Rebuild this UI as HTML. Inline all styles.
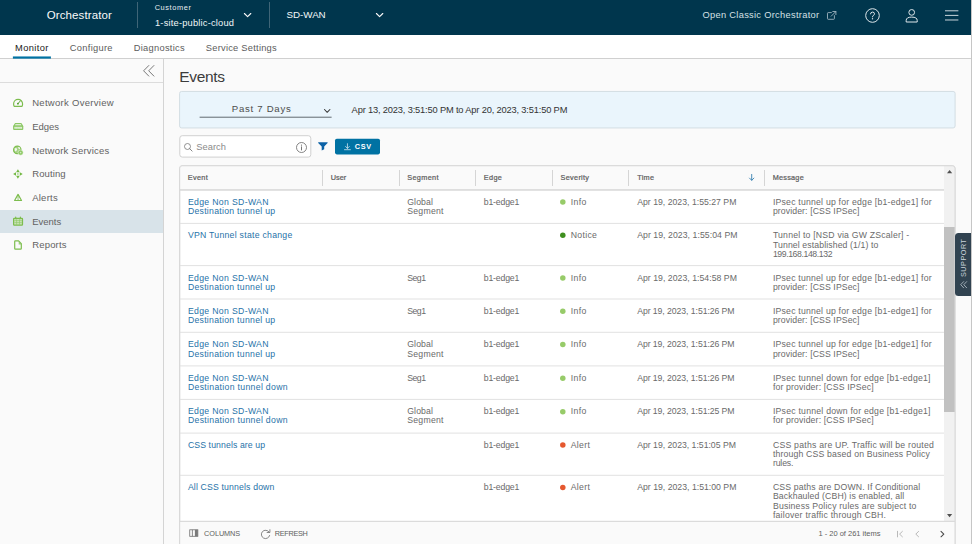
<!DOCTYPE html>
<html lang="en">
<head>
<meta charset="utf-8">
<title>Orchestrator - Events</title>
<style>
html,body{margin:0;padding:0;}
body{width:972px;height:544px;overflow:hidden;position:relative;background:#fafafa;font-family:"Liberation Sans",sans-serif;}
.t{position:absolute;white-space:pre;line-height:1;display:block;}
.abs{position:absolute;}
header{position:absolute;left:0;top:0;width:972px;height:35px;background:#00364d;}
.vdiv{position:absolute;top:2px;width:1px;height:26px;background:#3f6577;}
nav.sub{position:absolute;left:0;top:35px;width:972px;height:23px;background:#fff;border-bottom:1px solid #d0d0d0;}
aside{position:absolute;left:0;top:59px;width:163px;height:485px;background:#fafafa;border-right:1px solid #d4d4d4;}
.side-sep{position:absolute;left:0;top:23px;width:163px;height:1px;background:#dcdcdc;}
.side-active{position:absolute;left:0;top:150.6px;width:163px;height:23.4px;background:#d8e3e9;}
svg{position:absolute;overflow:visible;}
.g{fill:none;stroke:#60a830;stroke-width:1;stroke-linecap:round;stroke-linejoin:round;}
main{position:absolute;left:164px;top:59px;width:808px;height:485px;}
.thead{position:absolute;left:180px;top:166px;width:764px;height:23.2px;background:#fafafa;}
.colsep{position:absolute;top:170px;width:1px;height:15.6px;background:#d5d5d5;}
.sbar{position:absolute;left:944px;top:166px;width:11px;height:356px;background:#f1f1f1;}
.thumb{position:absolute;left:944px;top:227.3px;width:11px;height:185.2px;background:#c1c1c1;}
.foot{position:absolute;left:180px;top:521.3px;width:775px;height:23px;background:#fafafa;}
.support{position:absolute;left:955px;top:233px;width:17px;height:63.3px;background:#314351;border-radius:3.5px 0 0 3.5px;}
.rot{position:absolute;white-space:pre;transform-origin:0 0;transform:rotate(-90deg);font-size:7.2px;line-height:1;color:#c9d3da;letter-spacing:0.55px;}
.rightline{position:absolute;left:971px;top:0;width:1px;height:544px;background:#c6c6c6;z-index:5;}
</style>
</head>
<body>
<div class="rightline"></div>
<header>
<div class="vdiv" style="left:137px"></div>
<div class="vdiv" style="left:269px"></div>
<span class="t" style="left:46.80px;top:10.00px;font-size:11.5px;letter-spacing:0.098px;color:#fafafa;">Orchestrator</span>
<span class="t" style="left:154.70px;top:4.00px;font-size:7.4px;letter-spacing:0.593px;color:#e8eef1;">Customer</span>
<span class="t" style="left:155.00px;top:19.00px;font-size:9.3px;letter-spacing:0.197px;color:#f2f6f8;">1-site-public-cloud</span>
<span class="t" style="left:286.60px;top:10.00px;font-size:9.8px;letter-spacing:-0.055px;color:#f2f6f8;">SD-WAN</span>
<span class="t" style="left:702.50px;top:11.00px;font-size:9.3px;letter-spacing:0.294px;color:#d5e0e6;">Open Classic Orchestrator</span>
<!-- chevrons -->
<svg style="left:244px;top:12.8px" width="7.2" height="4.4" viewBox="0 0 7.2 4.4"><path d="M0.4 0.5 L3.6 3.7 L6.8 0.5" fill="none" stroke="#fafafa" stroke-width="1.1" stroke-linecap="round" stroke-linejoin="round"/></svg>
<svg style="left:375.7px;top:12.8px" width="7.2" height="4.4" viewBox="0 0 7.2 4.4"><path d="M0.4 0.5 L3.6 3.7 L6.8 0.5" fill="none" stroke="#fafafa" stroke-width="1.1" stroke-linecap="round" stroke-linejoin="round"/></svg>
<!-- external link -->
<svg style="left:826.6px;top:11px" width="9.4" height="8.8" viewBox="0 0 9.4 8.8"><path d="M7.4 4.6 V7.6 Q7.4 8.3 6.7 8.3 H1.2 Q0.5 8.3 0.5 7.6 V2.3 Q0.5 1.6 1.2 1.6 H4.4 M5.8 0.5 H8.9 V3.6 M8.8 0.6 L4.2 5.2" fill="none" stroke="#a9bcc6" stroke-width="0.85" stroke-linecap="round" stroke-linejoin="round"/></svg>
<!-- help -->
<svg style="left:864.7px;top:8px" width="15" height="15" viewBox="0 0 15 15"><circle cx="7.5" cy="7.5" r="6.8" fill="none" stroke="#dfe7eb" stroke-width="1"/><path d="M5.5 5.9 Q5.5 4.1 7.5 4.1 Q9.5 4.1 9.5 5.8 Q9.5 6.9 8.4 7.4 Q7.5 7.8 7.5 8.9" fill="none" stroke="#dfe7eb" stroke-width="1" stroke-linecap="round"/><circle cx="7.5" cy="10.8" r="0.7" fill="#dfe7eb"/></svg>
<!-- user -->
<svg style="left:905.3px;top:8.5px" width="13" height="14" viewBox="0 0 13 14"><circle cx="6.7" cy="3.4" r="2.85" fill="none" stroke="#dfe7eb" stroke-width="1"/><path d="M1.2 13 V11.4 Q1.2 8.1 6.7 8.1 Q12.2 8.1 12.2 11.4 V13 Z" fill="none" stroke="#dfe7eb" stroke-width="1" stroke-linejoin="round"/></svg>
<!-- hamburger -->
<svg style="left:944.7px;top:10px" width="13.4" height="11" viewBox="0 0 13.4 11"><path d="M0.4 0.8 H13 M0.4 5.4 H13 M0.4 10 H13" fill="none" stroke="#c9d5dc" stroke-width="1" stroke-linecap="round"/></svg>
</header>

<nav class="sub">
<svg style="left:0;top:0" width="100" height="24" viewBox="0 0 100 24"><rect x="12.9" y="21.45" width="38" height="2.2" fill="#0072a3"/></svg>
</nav>
<span class="t" style="left:15.00px;top:44.00px;font-size:9.3px;letter-spacing:0.381px;color:#1a1a1a;">Monitor</span>
<span class="t" style="left:69.80px;top:44.00px;font-size:9.3px;letter-spacing:0.298px;color:#5c5c5c;">Configure</span>
<span class="t" style="left:133.80px;top:44.00px;font-size:9.3px;letter-spacing:0.274px;color:#5c5c5c;">Diagnostics</span>
<span class="t" style="left:205.80px;top:44.00px;font-size:9.3px;letter-spacing:0.247px;color:#5c5c5c;">Service Settings</span>

<aside>
<svg style="left:143.2px;top:5.7px" width="11.5" height="11.6" viewBox="0 0 11.5 11.6"><path d="M5.8 0.5 L0.6 5.8 L5.8 11.1 M10.9 0.5 L5.7 5.8 L10.9 11.1" fill="none" stroke="#6a6a6a" stroke-width="0.9" stroke-linecap="round" stroke-linejoin="round"/></svg>
<div class="side-sep"></div>
<div class="side-active"></div>
</aside>
<!-- sidebar icons (page coords) -->
<svg style="left:0;top:0" width="40" height="300" viewBox="0 0 40 300">
<g fill="none" stroke="#7dbd4e" stroke-width="1.2" stroke-linecap="round" stroke-linejoin="round">
<!-- network overview: gauge -->
<path d="M14.3 106.4 Q13.6 105.3 13.6 103.9 A4.5 4.5 0 0 1 22.6 103.9 Q22.6 105.3 21.9 106.4 Z"/>
<path d="M18 103.6 L20.2 101.1" stroke="#5aa632" stroke-width="1"/>
<!-- edges -->
<path d="M15.2 123.7 H21.2 L22.7 126.2 H13.7 Z" stroke="#8cc864"/>
<rect x="13.7" y="126.2" width="9" height="3.2" rx="0.5" fill="#d5eac6" stroke="#8cc864"/>
<!-- network services -->
<circle cx="17.3" cy="149.9" r="3.7" fill="#a5d282"/>
<!-- alerts -->
<path d="M18.05 194.4 L21.5 200.5 H14.6 Z"/>
<path d="M18.05 196.6 V198.4" stroke-width="0.9"/>
<!-- events: calendar -->
<rect x="13.6" y="218.3" width="8.9" height="6.9" rx="0.6" fill="#c9e2b6"/>
<path d="M15.7 217 V218.6 M20.4 217 V218.6"/>
<!-- reports -->
<path d="M15.4 240.9 H18.6 L21.3 243.6 V248.4 Q21.3 249.1 20.6 249.1 H15.4 Q14.7 249.1 14.7 248.4 V241.6 Q14.7 240.9 15.4 240.9 Z"/>
</g>
<circle cx="17.9" cy="103.7" r="0.9" fill="#4f9c2a"/>
<path d="M14.6 127.9 H21.8" stroke="#fafafa" stroke-width="0.7" stroke-dasharray="0.9 0.7" fill="none" opacity="0.7"/>
<!-- globe land patches -->
<path d="M14.6 148.2 L16.4 148 L17.2 149.6 L16 151.6 L14.8 151 Z M18 146.8 L20 147.6 L20.2 149.2 L18.6 148.8 Z" fill="#fafafa" opacity="0.9"/>
<circle cx="20.6" cy="152.6" r="2.6" fill="#8fca66" stroke="#fafafa" stroke-width="0.5"/>
<circle cx="20.6" cy="152.6" r="0.8" fill="#d4eac4"/>
<!-- routing -->
<g fill="#72b842"><path d="M17.9 169.3 L19.7 172.2 H16.1 Z"/><path d="M17.9 178.7 L19.7 175.8 H16.1 Z"/><path d="M13.1 174 L16 172.2 V175.8 Z"/><path d="M22.7 174 L19.8 172.2 V175.8 Z"/><circle cx="17.9" cy="174" r="0.65"/></g>
<circle cx="18.05" cy="199.5" r="0.5" fill="#6db43d"/>
<path d="M18.7 241 L21.2 243.5 V244.6 H18.7 Z" fill="#8cc864" opacity="0.85"/>
<path d="M14.4 220.6 H21.8 M14.4 222.6 H21.8 M16.6 219.2 V224.8 M19.5 219.2 V224.8" stroke="#8cc864" stroke-width="0.6" fill="none"/>
</svg>
<span class="t" style="left:32.20px;top:98.00px;font-size:9.5px;letter-spacing:0.295px;color:#626262;">Network Overview</span>
<span class="t" style="left:32.20px;top:122.00px;font-size:9.5px;letter-spacing:-0.009px;color:#626262;">Edges</span>
<span class="t" style="left:32.20px;top:146.00px;font-size:9.5px;letter-spacing:0.212px;color:#626262;">Network Services</span>
<span class="t" style="left:32.20px;top:169.00px;font-size:9.5px;letter-spacing:0.108px;color:#626262;">Routing</span>
<span class="t" style="left:32.20px;top:193.00px;font-size:9.5px;letter-spacing:0.241px;color:#626262;">Alerts</span>
<span class="t" style="left:32.20px;top:217.00px;font-size:9.5px;letter-spacing:-0.009px;color:#626262;">Events</span>
<span class="t" style="left:32.20px;top:240.00px;font-size:9.5px;letter-spacing:0.172px;color:#626262;">Reports</span>

<main></main>
<svg style="left:0;top:0" width="972" height="544" viewBox="0 0 972 544"><rect x="179.6" y="91.45" width="775.5" height="36.5" rx="2" fill="#eaf5fc" stroke="#d3dde3" stroke-width="1"/><rect x="199.6" y="116.7" width="132" height="1" fill="#616a70"/><rect x="179.8" y="135.7" width="131" height="21.4" rx="2.5" fill="#fff" stroke="#d0d0d0" stroke-width="1"/></svg>
<svg style="left:323.8px;top:108.8px" width="6.4" height="4" viewBox="0 0 6.4 4"><path d="M0.5 0.5 L3.2 3.3 L5.9 0.5" fill="none" stroke="#3a3a3a" stroke-width="1.05" stroke-linecap="round" stroke-linejoin="round"/></svg>
<svg style="left:183.8px;top:142.6px" width="8.6" height="8.6" viewBox="0 0 8.6 8.6"><circle cx="3.5" cy="3.5" r="3" fill="none" stroke="#777" stroke-width="0.8"/><path d="M5.7 5.7 L8.1 8.1" stroke="#777" stroke-width="0.9" stroke-linecap="round"/></svg>
<svg style="left:295.9px;top:142px" width="11" height="11" viewBox="0 0 11 11"><circle cx="5.5" cy="5.5" r="5" fill="none" stroke="#666" stroke-width="0.8"/><path d="M5.5 4.8 V8" stroke="#666" stroke-width="0.9" stroke-linecap="round"/><circle cx="5.5" cy="3.1" r="0.6" fill="#666"/></svg>
<svg style="left:318.4px;top:142.3px" width="9.8" height="8.8" viewBox="0 0 9.8 8.8"><path d="M0.2 0.2 H9.6 V1.1 L6.2 4.5 V7.3 L3.7 8.5 V4.5 L0.2 1.1 Z" fill="#0c62a6"/></svg>
<svg style="left:0;top:0" width="972" height="544" viewBox="0 0 972 544"><rect x="335" y="138.7" width="45" height="15.7" rx="1.8" fill="#0072a3"/><path d="M347.45 143.7 V148.2 M345.6 146.5 L347.45 148.4 L349.3 146.5 M344.5 149.7 H350.4" fill="none" stroke="#fff" stroke-width="0.65" stroke-linecap="round" stroke-linejoin="round"/></svg>
<span class="t" style="left:179.20px;top:69.00px;font-size:15.5px;letter-spacing:-0.318px;color:#3c3c3c;">Events</span>
<span class="t" style="left:231.80px;top:104.00px;font-size:9.6px;letter-spacing:0.717px;color:#4d4d4d;">Past 7 Days</span>
<span class="t" style="left:351.60px;top:106.00px;font-size:9.3px;letter-spacing:-0.167px;color:#333;">Apr 13, 2023, 3:51:50 PM to Apr 20, 2023, 3:51:50 PM</span>
<span class="t" style="left:196.30px;top:143.00px;font-size:9.3px;letter-spacing:0.026px;color:#8a8a8a;">Search</span>
<span class="t" style="left:354.70px;top:143.00px;font-size:7.3px;letter-spacing:0.742px;color:#fff;font-weight:700;">CSV</span>

<svg style="left:0;top:0" width="972" height="544" viewBox="0 0 972 544"><rect x="179.7" y="165.75" width="775.3" height="400" rx="2.5" fill="#fff" stroke="#d8d8d8" stroke-width="1"/></svg>
<div class="thead"></div>
<div class="colsep" style="left:322px"></div>
<div class="colsep" style="left:398.5px"></div>
<div class="colsep" style="left:475px"></div>
<div class="colsep" style="left:551.6px"></div>
<div class="colsep" style="left:628.4px"></div>
<div class="colsep" style="left:764.4px"></div>
<svg style="left:748.8px;top:173.8px" width="5.4" height="6.8" viewBox="0 0 5.4 6.8"><path d="M2.7 0.4 V6.2 M0.5 4.1 L2.7 6.3 L4.9 4.1" fill="none" stroke="#1f72a8" stroke-width="0.8" stroke-linecap="round" stroke-linejoin="round"/></svg>
<span class="t" style="left:187.80px;top:174.00px;font-size:7.3px;letter-spacing:0.332px;color:#5e5e5e;-webkit-text-stroke:0.22px #5e5e5e;">Event</span>
<span class="t" style="left:330.70px;top:174.00px;font-size:7.3px;letter-spacing:0.065px;color:#5e5e5e;-webkit-text-stroke:0.22px #5e5e5e;">User</span>
<span class="t" style="left:407.25px;top:174.00px;font-size:7.3px;letter-spacing:0.339px;color:#5e5e5e;-webkit-text-stroke:0.22px #5e5e5e;">Segment</span>
<span class="t" style="left:483.75px;top:174.00px;font-size:7.3px;letter-spacing:0.368px;color:#5e5e5e;-webkit-text-stroke:0.22px #5e5e5e;">Edge</span>
<span class="t" style="left:560.60px;top:174.00px;font-size:7.3px;letter-spacing:0.292px;color:#5e5e5e;-webkit-text-stroke:0.22px #5e5e5e;">Severity</span>
<span class="t" style="left:637.20px;top:174.00px;font-size:7.3px;letter-spacing:0.282px;color:#5e5e5e;-webkit-text-stroke:0.22px #5e5e5e;">Time</span>
<span class="t" style="left:772.80px;top:174.00px;font-size:7.3px;letter-spacing:0.215px;color:#5e5e5e;-webkit-text-stroke:0.22px #5e5e5e;">Message</span>
<svg style="left:559px;top:197px" width="8" height="9" viewBox="0 0 8 9"><circle cx="3.8" cy="4.90" r="2.75" fill="#97cb69"/></svg>
<svg style="left:559px;top:231px" width="8" height="9" viewBox="0 0 8 9"><circle cx="3.8" cy="4.30" r="2.75" fill="#3f8f1f"/></svg>
<svg style="left:559px;top:273px" width="8" height="9" viewBox="0 0 8 9"><circle cx="3.8" cy="4.90" r="2.75" fill="#97cb69"/></svg>
<svg style="left:559px;top:307px" width="8" height="9" viewBox="0 0 8 9"><circle cx="3.8" cy="4.30" r="2.75" fill="#97cb69"/></svg>
<svg style="left:559px;top:340px" width="8" height="9" viewBox="0 0 8 9"><circle cx="3.8" cy="4.60" r="2.75" fill="#97cb69"/></svg>
<svg style="left:559px;top:374px" width="8" height="9" viewBox="0 0 8 9"><circle cx="3.8" cy="4.20" r="2.75" fill="#97cb69"/></svg>
<svg style="left:559px;top:407px" width="8" height="9" viewBox="0 0 8 9"><circle cx="3.8" cy="4.70" r="2.75" fill="#97cb69"/></svg>
<svg style="left:559px;top:441px" width="8" height="9" viewBox="0 0 8 9"><circle cx="3.8" cy="4.00" r="2.75" fill="#e5582f"/></svg>
<svg style="left:559px;top:483px" width="8" height="9" viewBox="0 0 8 9"><circle cx="3.8" cy="4.60" r="2.75" fill="#e5582f"/></svg>
<svg style="left:180px;top:0" width="775" height="544" viewBox="0 0 775 544"><rect x="0" y="189.2" width="764" height="1.5" fill="#d6d6d6"/><rect x="0" y="222.9" width="764" height="1" fill="#e2e2e2"/><rect x="0" y="265.1" width="764" height="1" fill="#e2e2e2"/><rect x="0" y="298.5" width="764" height="1" fill="#e2e2e2"/><rect x="0" y="331.8" width="764" height="1" fill="#e2e2e2"/><rect x="0" y="365.4" width="764" height="1" fill="#e2e2e2"/><rect x="0" y="398.9" width="764" height="1" fill="#e2e2e2"/><rect x="0" y="432.6" width="764" height="1" fill="#e2e2e2"/><rect x="0" y="474.8" width="764" height="1" fill="#e2e2e2"/></svg>
<span class="t" style="left:187.90px;top:198.00px;font-size:8.7px;letter-spacing:0.331px;color:#1f72a8;">Edge Non SD-WAN</span>
<span class="t" style="left:187.90px;top:207.00px;font-size:8.7px;letter-spacing:0.279px;color:#1f72a8;">Destination tunnel up</span>
<span class="t" style="left:407.25px;top:198.00px;font-size:8.7px;letter-spacing:0.095px;color:#6a6a6a;">Global</span>
<span class="t" style="left:407.25px;top:207.00px;font-size:8.7px;letter-spacing:0.245px;color:#6a6a6a;">Segment</span>
<span class="t" style="left:483.75px;top:198.00px;font-size:8.7px;letter-spacing:-0.160px;color:#6a6a6a;">b1-edge1</span>
<span class="t" style="left:570.70px;top:198.00px;font-size:8.7px;letter-spacing:0.367px;color:#6a6a6a;">Info</span>
<span class="t" style="left:637.20px;top:198.00px;font-size:8.7px;letter-spacing:0.008px;color:#6a6a6a;">Apr 19, 2023, 1:55:27 PM</span>
<span class="t" style="left:772.90px;top:198.00px;font-size:8.7px;letter-spacing:0.213px;color:#6a6a6a;">IPsec tunnel up for edge [b1-edge1] for</span>
<span class="t" style="left:772.90px;top:207.00px;font-size:8.7px;letter-spacing:0.105px;color:#6a6a6a;">provider: [CSS IPSec]</span>
<span class="t" style="left:187.90px;top:231.00px;font-size:8.7px;letter-spacing:0.267px;color:#1f72a8;">VPN Tunnel state change</span>
<span class="t" style="left:570.70px;top:231.00px;font-size:8.7px;letter-spacing:0.315px;color:#6a6a6a;">Notice</span>
<span class="t" style="left:637.20px;top:231.00px;font-size:8.7px;letter-spacing:0.056px;color:#6a6a6a;">Apr 19, 2023, 1:55:04 PM</span>
<span class="t" style="left:772.90px;top:231.00px;font-size:8.7px;letter-spacing:0.202px;color:#6a6a6a;">Tunnel to [NSD via GW ZScaler] -</span>
<span class="t" style="left:772.90px;top:241.00px;font-size:8.7px;letter-spacing:0.114px;color:#6a6a6a;">Tunnel established (1/1) to</span>
<span class="t" style="left:772.90px;top:250.00px;font-size:8.7px;letter-spacing:-0.402px;color:#6a6a6a;">199.168.148.132</span>
<span class="t" style="left:187.90px;top:274.00px;font-size:8.7px;letter-spacing:0.331px;color:#1f72a8;">Edge Non SD-WAN</span>
<span class="t" style="left:187.90px;top:283.00px;font-size:8.7px;letter-spacing:0.279px;color:#1f72a8;">Destination tunnel up</span>
<span class="t" style="left:407.25px;top:274.00px;font-size:8.7px;letter-spacing:-0.516px;color:#6a6a6a;">Seg1</span>
<span class="t" style="left:483.75px;top:274.00px;font-size:8.7px;letter-spacing:-0.160px;color:#6a6a6a;">b1-edge1</span>
<span class="t" style="left:570.70px;top:274.00px;font-size:8.7px;letter-spacing:0.367px;color:#6a6a6a;">Info</span>
<span class="t" style="left:637.20px;top:274.00px;font-size:8.7px;letter-spacing:0.030px;color:#6a6a6a;">Apr 19, 2023, 1:54:58 PM</span>
<span class="t" style="left:772.90px;top:274.00px;font-size:8.7px;letter-spacing:0.213px;color:#6a6a6a;">IPsec tunnel up for edge [b1-edge1] for</span>
<span class="t" style="left:772.90px;top:283.00px;font-size:8.7px;letter-spacing:0.105px;color:#6a6a6a;">provider: [CSS IPSec]</span>
<span class="t" style="left:187.90px;top:307.00px;font-size:8.7px;letter-spacing:0.331px;color:#1f72a8;">Edge Non SD-WAN</span>
<span class="t" style="left:187.90px;top:316.00px;font-size:8.7px;letter-spacing:0.279px;color:#1f72a8;">Destination tunnel up</span>
<span class="t" style="left:407.25px;top:307.00px;font-size:8.7px;letter-spacing:-0.516px;color:#6a6a6a;">Seg1</span>
<span class="t" style="left:483.75px;top:307.00px;font-size:8.7px;letter-spacing:-0.160px;color:#6a6a6a;">b1-edge1</span>
<span class="t" style="left:570.70px;top:307.00px;font-size:8.7px;letter-spacing:0.367px;color:#6a6a6a;">Info</span>
<span class="t" style="left:637.20px;top:307.00px;font-size:8.7px;letter-spacing:-0.070px;color:#6a6a6a;">Apr 19, 2023, 1:51:26 PM</span>
<span class="t" style="left:772.90px;top:307.00px;font-size:8.7px;letter-spacing:0.213px;color:#6a6a6a;">IPsec tunnel up for edge [b1-edge1] for</span>
<span class="t" style="left:772.90px;top:316.00px;font-size:8.7px;letter-spacing:0.105px;color:#6a6a6a;">provider: [CSS IPSec]</span>
<span class="t" style="left:187.90px;top:340.00px;font-size:8.7px;letter-spacing:0.331px;color:#1f72a8;">Edge Non SD-WAN</span>
<span class="t" style="left:187.90px;top:350.00px;font-size:8.7px;letter-spacing:0.279px;color:#1f72a8;">Destination tunnel up</span>
<span class="t" style="left:407.25px;top:340.00px;font-size:8.7px;letter-spacing:0.095px;color:#6a6a6a;">Global</span>
<span class="t" style="left:407.25px;top:350.00px;font-size:8.7px;letter-spacing:0.245px;color:#6a6a6a;">Segment</span>
<span class="t" style="left:483.75px;top:340.00px;font-size:8.7px;letter-spacing:-0.160px;color:#6a6a6a;">b1-edge1</span>
<span class="t" style="left:570.70px;top:340.00px;font-size:8.7px;letter-spacing:0.367px;color:#6a6a6a;">Info</span>
<span class="t" style="left:637.20px;top:340.00px;font-size:8.7px;letter-spacing:-0.070px;color:#6a6a6a;">Apr 19, 2023, 1:51:26 PM</span>
<span class="t" style="left:772.90px;top:340.00px;font-size:8.7px;letter-spacing:0.213px;color:#6a6a6a;">IPsec tunnel up for edge [b1-edge1] for</span>
<span class="t" style="left:772.90px;top:350.00px;font-size:8.7px;letter-spacing:0.105px;color:#6a6a6a;">provider: [CSS IPSec]</span>
<span class="t" style="left:187.90px;top:374.00px;font-size:8.7px;letter-spacing:0.331px;color:#1f72a8;">Edge Non SD-WAN</span>
<span class="t" style="left:187.90px;top:383.00px;font-size:8.7px;letter-spacing:0.317px;color:#1f72a8;">Destination tunnel down</span>
<span class="t" style="left:407.25px;top:374.00px;font-size:8.7px;letter-spacing:-0.516px;color:#6a6a6a;">Seg1</span>
<span class="t" style="left:483.75px;top:374.00px;font-size:8.7px;letter-spacing:-0.160px;color:#6a6a6a;">b1-edge1</span>
<span class="t" style="left:570.70px;top:374.00px;font-size:8.7px;letter-spacing:0.367px;color:#6a6a6a;">Info</span>
<span class="t" style="left:637.20px;top:374.00px;font-size:8.7px;letter-spacing:-0.070px;color:#6a6a6a;">Apr 19, 2023, 1:51:26 PM</span>
<span class="t" style="left:772.90px;top:374.00px;font-size:8.7px;letter-spacing:0.232px;color:#6a6a6a;">IPsec tunnel down for edge [b1-edge1]</span>
<span class="t" style="left:772.90px;top:383.00px;font-size:8.7px;letter-spacing:0.152px;color:#6a6a6a;">for provider: [CSS IPSec]</span>
<span class="t" style="left:187.90px;top:407.00px;font-size:8.7px;letter-spacing:0.331px;color:#1f72a8;">Edge Non SD-WAN</span>
<span class="t" style="left:187.90px;top:416.00px;font-size:8.7px;letter-spacing:0.317px;color:#1f72a8;">Destination tunnel down</span>
<span class="t" style="left:407.25px;top:407.00px;font-size:8.7px;letter-spacing:0.095px;color:#6a6a6a;">Global</span>
<span class="t" style="left:407.25px;top:416.00px;font-size:8.7px;letter-spacing:0.245px;color:#6a6a6a;">Segment</span>
<span class="t" style="left:483.75px;top:407.00px;font-size:8.7px;letter-spacing:-0.160px;color:#6a6a6a;">b1-edge1</span>
<span class="t" style="left:570.70px;top:407.00px;font-size:8.7px;letter-spacing:0.367px;color:#6a6a6a;">Info</span>
<span class="t" style="left:637.20px;top:407.00px;font-size:8.7px;letter-spacing:-0.070px;color:#6a6a6a;">Apr 19, 2023, 1:51:25 PM</span>
<span class="t" style="left:772.90px;top:407.00px;font-size:8.7px;letter-spacing:0.232px;color:#6a6a6a;">IPsec tunnel down for edge [b1-edge1]</span>
<span class="t" style="left:772.90px;top:416.00px;font-size:8.7px;letter-spacing:0.152px;color:#6a6a6a;">for provider: [CSS IPSec]</span>
<span class="t" style="left:187.90px;top:441.00px;font-size:8.7px;letter-spacing:0.109px;color:#1f72a8;">CSS tunnels are up</span>
<span class="t" style="left:483.75px;top:441.00px;font-size:8.7px;letter-spacing:-0.160px;color:#6a6a6a;">b1-edge1</span>
<span class="t" style="left:570.70px;top:441.00px;font-size:8.7px;letter-spacing:0.331px;color:#6a6a6a;">Alert</span>
<span class="t" style="left:637.20px;top:441.00px;font-size:8.7px;letter-spacing:-0.012px;color:#6a6a6a;">Apr 19, 2023, 1:51:05 PM</span>
<span class="t" style="left:772.90px;top:441.00px;font-size:8.7px;letter-spacing:0.236px;color:#6a6a6a;">CSS paths are UP. Traffic will be routed</span>
<span class="t" style="left:772.90px;top:450.00px;font-size:8.7px;letter-spacing:0.167px;color:#6a6a6a;">through CSS based on Business Policy</span>
<span class="t" style="left:772.90px;top:459.00px;font-size:8.7px;letter-spacing:-0.130px;color:#6a6a6a;">rules.</span>
<span class="t" style="left:187.90px;top:483.00px;font-size:8.7px;letter-spacing:0.155px;color:#1f72a8;">All CSS tunnels down</span>
<span class="t" style="left:483.75px;top:483.00px;font-size:8.7px;letter-spacing:-0.160px;color:#6a6a6a;">b1-edge1</span>
<span class="t" style="left:570.70px;top:483.00px;font-size:8.7px;letter-spacing:0.331px;color:#6a6a6a;">Alert</span>
<span class="t" style="left:637.20px;top:483.00px;font-size:8.7px;letter-spacing:0.008px;color:#6a6a6a;">Apr 19, 2023, 1:51:00 PM</span>
<span class="t" style="left:772.90px;top:483.00px;font-size:8.7px;letter-spacing:0.159px;color:#6a6a6a;">CSS paths are DOWN. If Conditional</span>
<span class="t" style="left:772.90px;top:492.00px;font-size:8.7px;letter-spacing:0.123px;color:#6a6a6a;">Backhauled (CBH) is enabled, all</span>
<span class="t" style="left:772.90px;top:502.00px;font-size:8.7px;letter-spacing:0.196px;color:#6a6a6a;">Business Policy rules are subject to</span>
<span class="t" style="left:772.90px;top:511.00px;font-size:8.7px;letter-spacing:0.230px;color:#6a6a6a;">failover traffic through CBH.</span>
<div class="sbar"></div>
<div class="thumb"></div>
<svg style="left:946.8px;top:169.7px" width="5.2" height="3.2" viewBox="0 0 5.2 3.2"><path d="M2.6 0 L5.2 3.2 H0 Z" fill="#505050"/></svg>
<svg style="left:946.8px;top:513.9px" width="5.2" height="3.2" viewBox="0 0 5.2 3.2"><path d="M0 0 H5.2 L2.6 3.2 Z" fill="#505050"/></svg>
<div class="foot"></div>
<svg style="left:180px;top:0" width="775" height="544" viewBox="0 0 775 544"><rect x="0" y="520.8" width="775" height="1" fill="#d4d4d4"/></svg>
<svg style="left:0;top:0" width="972" height="544" viewBox="0 0 972 544"><rect x="179.7" y="165.75" width="775.3" height="400" rx="2.5" fill="none" stroke="#d8d8d8" stroke-width="1"/></svg>
<!-- columns icon -->
<svg style="left:189px;top:529px" width="9.6" height="8" viewBox="0 0 9.6 8"><rect x="0.75" y="0.8" width="8.1" height="6.5" fill="none" stroke="#6e6e6e" stroke-width="0.8"/><path d="M3.4 0.8 V7.3" stroke="#6e6e6e" stroke-width="0.8"/><rect x="5.9" y="0.8" width="2.95" height="6.5" fill="#7a7a7a"/></svg>
<!-- refresh icon -->
<svg style="left:260.8px;top:528.6px" width="10" height="10.4" viewBox="0 0 10 10.4"><path d="M8.04 2.99 A4.2 4.2 0 1 0 8.66 6.49" fill="none" stroke="#6a6a6a" stroke-width="0.8" stroke-linecap="round"/><path d="M8.9 0.7 V3.5 H6.1" fill="none" stroke="#6a6a6a" stroke-width="0.8" stroke-linecap="round" stroke-linejoin="round"/></svg>
<span class="t" style="left:204.10px;top:530.00px;font-size:7.3px;letter-spacing:-0.067px;color:#5f5f5f;">COLUMNS</span>
<span class="t" style="left:274.80px;top:530.00px;font-size:7.3px;letter-spacing:-0.312px;color:#5f5f5f;">REFRESH</span>
<span class="t" style="left:818.50px;top:530.00px;font-size:7.5px;letter-spacing:-0.013px;color:#5f5f5f;">1 - 20 of 261 items</span>
<!-- pagination icons -->
<svg style="left:897.4px;top:530.5px" width="6" height="6.2" viewBox="0 0 6 6.2"><path d="M0.5 0.3 V5.9 M5.4 0.4 L2.6 3.1 L5.4 5.8" fill="none" stroke="#b5b5b5" stroke-width="0.95" stroke-linecap="round" stroke-linejoin="round"/></svg>
<svg style="left:915.3px;top:530.5px" width="4.6" height="6.2" viewBox="0 0 4.6 6.2"><path d="M3.6 0.4 L0.8 3.1 L3.6 5.8" fill="none" stroke="#b5b5b5" stroke-width="0.95" stroke-linecap="round" stroke-linejoin="round"/></svg>
<svg style="left:939.5px;top:530.5px" width="4.8" height="6.2" viewBox="0 0 4.8 6.2"><path d="M1 0.4 L3.8 3.1 L1 5.8" fill="none" stroke="#4a4a4a" stroke-width="1.1" stroke-linecap="round" stroke-linejoin="round"/></svg>

<div class="support">
<span class="rot" style="left:4.9px;top:44.4px">SUPPORT</span>
<svg style="left:5.2px;top:48.2px" width="7.2" height="7.4" viewBox="0 0 8 8"><path d="M4 0.6 L0.8 4 L4 7.4 M7.4 0.6 L4.2 4 L7.4 7.4" fill="none" stroke="#c9d3da" stroke-width="0.8" stroke-linecap="round" stroke-linejoin="round"/></svg>
</div>
</body>
</html>
